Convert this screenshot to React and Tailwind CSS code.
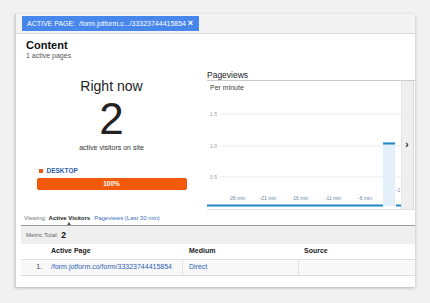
import React from "react";

const F = { fontFamily: '"Liberation Sans", Arial, sans-serif' };

function Chart() {
  const xl = [
    [30, "-26 min"],
    [61, "-21 min"],
    [93, "-16 min"],
    [126, "-11 min"],
    [158, "-6 min"],
  ];
  return (
    <svg width="195" height="128" viewBox="0 0 195 128" style={F}>
      <text x="3" y="8.5" fontSize="7" fill="#444">Per minute</text>
      {[[33, "1.5"], [65, "1.0"], [96, "0.5"]].map(([y, t]) => (
        <g key={t}>
          <line x1="13" x2="195" y1={y} y2={y} stroke="#ebebeb" strokeWidth="1" />
          <text x="3" y={y + 1.5} fontSize="5" fill="#999">{t}</text>
        </g>
      ))}
      <rect x="176" y="61" width="12" height="64" fill="#e3f0fa" />
      <rect x="176" y="61.5" width="12" height="2" fill="#1f86c9" />
      {xl.map(([x, t]) => (
        <text key={t} x={x} y="119" fontSize="5" fill="#6a86a8" textAnchor="middle">{t}</text>
      ))}
      <text x="191" y="111" fontSize="5" fill="#6a86a8" textAnchor="middle">-1</text>
      <rect x="0" y="123.5" width="176" height="2" fill="#1a87c6" />
      <rect x="189" y="123.5" width="5" height="2" fill="#1a87c6" />
    </svg>
  );
}

export default function App() {
  return (
    <div className="w-[430px] h-[303px] bg-[#f1f1f1] pt-[14px] pl-[15px]" style={F}>
      <div className="w-[400px] h-[273px] bg-white border-l border-[#cfcfcf] shadow-[0_1px_3px_rgba(0,0,0,0.25)] flex flex-col">
        {/* top bar */}
        <div className="h-[20px] shrink-0 bg-[#f3f3f3] border-b border-[#dadada] flex items-center pl-[6px]">
          <div className="h-[15px] w-[177px] bg-[#4787ec] text-white flex items-center justify-between pl-[5px] pr-[6px] text-[7px] leading-[8px]">
            <span className="whitespace-nowrap">ACTIVE PAGE:&nbsp; /form.jotform.c.../33323744415854</span>
            <span className="text-[9px] font-bold leading-[9px]">×</span>
          </div>
        </div>
        {/* header */}
        <div className="pl-[10px] pt-[6px] h-[25px] shrink-0">
          <div className="text-[11px] leading-[11px] font-bold text-[#111]">Content</div>
          <div className="text-[7px] leading-[8px] mt-[1px] text-[#555]">1 active pages</div>
        </div>
        {/* middle */}
        <div className="flex h-[152px] shrink-0">
          <div className="w-[191px] flex flex-col items-center pt-[19px]">
            <div className="text-[14px] leading-[16px] text-[#222]">Right now</div>
            <div className="text-[44px] leading-[44px] mt-[3px] text-[#222]">2</div>
            <div className="text-[7px] leading-[8px] mt-[3px] text-[#333]">active visitors on site</div>
            <div className="w-[150px] mt-[15px]">
              <div className="flex items-center pl-[2px] h-[8px]">
                <span className="w-[4px] h-[4px] bg-[#ef5a12]"></span>
                <span className="ml-[4px] text-[6.5px] leading-[8px] font-bold text-[#2f5ea8]">DESKTOP</span>
              </div>
              <div className="mt-[3px] h-[12px] rounded-[2px] bg-[#f05a0a] flex items-center justify-center text-white text-[6.5px] font-bold">100%</div>
            </div>
          </div>
          <div className="w-[208px] flex flex-col pt-[11px]">
            <div className="text-[8.5px] leading-[10px] text-[#222] border-b border-[#cccccc]">Pageviews</div>
            <div className="flex h-[129px] border-b border-[#e2e2e2]">
              <div className="w-[195px] border-r border-[#e4e4e4]">
                <Chart />
              </div>
              <div className="w-[12px] bg-[#efefef] border-r border-[#d8d8d8] flex flex-col items-center pt-[59px]">
                <span className="text-[10px] leading-[10px] font-bold text-[#222] -ml-[1px]">›</span>
              </div>
            </div>
          </div>
        </div>
        {/* viewing row */}
        <div className="h-[14px] shrink-0 flex items-center pl-[8px] text-[6px] leading-[8px]">
          <span className="text-[#777]">Viewing:</span>
          <span className="relative ml-[2px] font-bold text-[#222]">
            Active Visitors
            <span className="absolute left-[18px] top-[8px] w-0 h-0 border-l-[2.5px] border-r-[2.5px] border-b-[3px] border-l-transparent border-r-transparent border-b-[#555]"></span>
          </span>
          <span className="ml-[4px] text-[#3a6fc4]">Pageviews (Last 30 min)</span>
        </div>
        {/* metric total */}
        <div className="ml-[5px] flex flex-col">
          <div className="h-[19px] bg-[#efefef] border-t border-[#9a9a9a] flex items-center pl-[5px]">
            <span className="text-[6px] text-[#666]">Metric Total:</span>
            <span className="ml-[3px] text-[8.5px] font-bold text-[#111]">2</span>
          </div>
          <div className="h-[16px] flex items-center border-b border-[#dddddd] text-[7px] font-bold text-[#222]">
            <div className="w-[162px] pl-[30px]">Active Page</div>
            <div className="w-[116px] pl-[6px]">Medium</div>
            <div className="flex-1 pl-[5px]">Source</div>
          </div>
          <div className="h-[16px] flex border-b border-[#dddddd] bg-[#f8f8f8] text-[7px]">
            <div className="w-[162px] flex items-center border-r border-[#e2e2e2]">
              <span className="w-[30px] text-right pr-[9px] text-[#444]">1.</span>
              <span className="text-[#2f62b4]">/form.jotform.co/form/33323744415854</span>
            </div>
            <div className="w-[116px] flex items-center pl-[6px] border-r border-[#e2e2e2] text-[#2f62b4]">Direct</div>
            <div className="flex-1"></div>
          </div>
        </div>
      </div>
    </div>
  );
}
